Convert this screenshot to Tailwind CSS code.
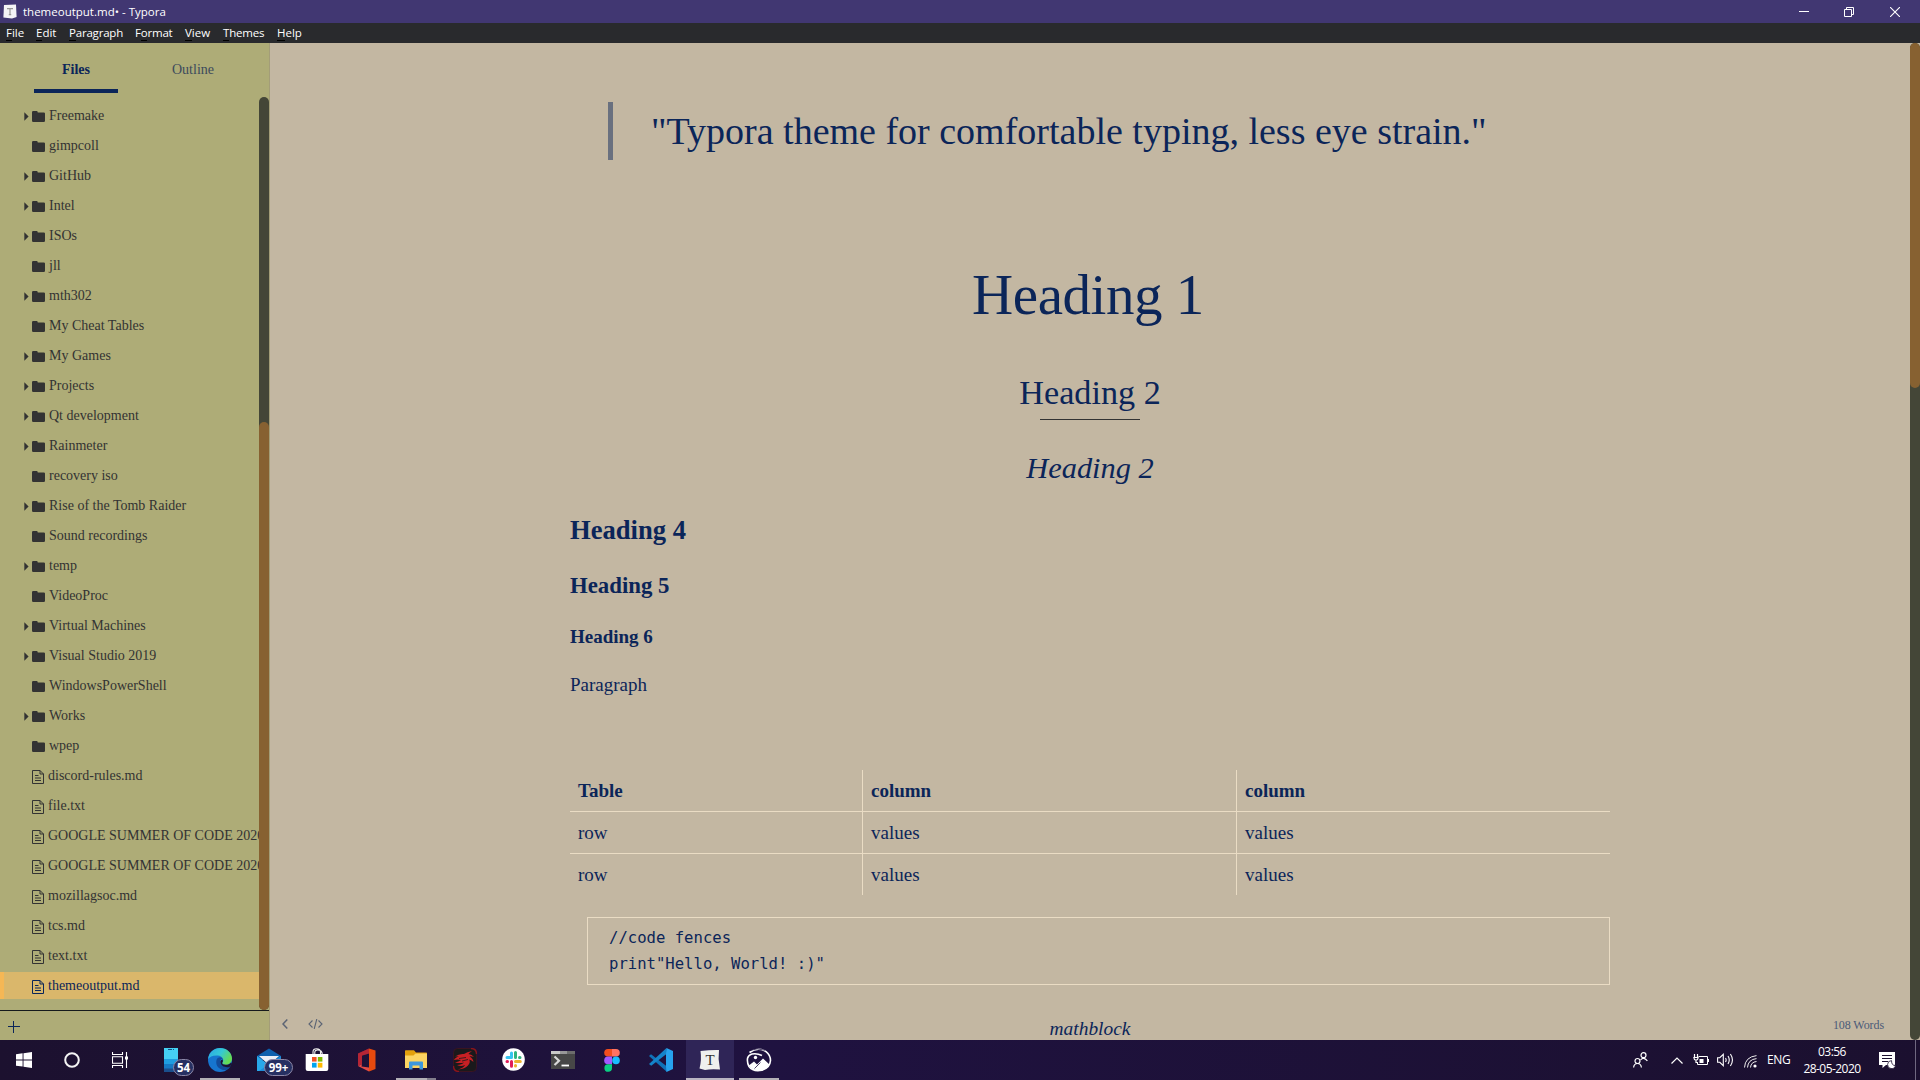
<!DOCTYPE html>
<html lang="en">
<head>
<meta charset="utf-8">
<title>themeoutput.md• - Typora</title>
<script src="https://cdn.jsdelivr.net/npm/@tailwindcss/browser@4"></script>
</head>
<body class="w-[1920px] h-[1080px] overflow-hidden flex flex-col bg-[#c3b7a2] font-['Liberation_Serif',serif] text-[#0b2559]">

<svg class="hidden">
  <symbol id="folder" viewBox="0 0 13 11"><path d="M0 1.2Q0 0 1.2 0H4.6Q5.6 0 5.8 1.4H11.8Q13 1.4 13 2.6V9.8Q13 11 11.8 11H1.2Q0 11 0 9.8Z" fill="#333"/></symbol>
  <symbol id="caret" viewBox="0 0 5 9"><path d="M.3 .3L4.6 4.5L.3 8.7Z" fill="#333"/></symbol>
  <symbol id="doc" viewBox="0 0 12 14"><path d="M.5 .5H8L11.5 4V13.5H.5ZM8 .5V4H11.5M3 5.5H6.5M3 8H9M3 10.5H9" fill="none" stroke="currentColor" stroke-width="1"/></symbol>
</svg>

<!-- Title bar -->
<header class="h-[23px] shrink-0 bg-[#413772] flex items-center pl-[3px] text-white font-['Open_Sans',sans-serif]">
  <svg class="w-[14px] h-[15px]" viewBox="0 0 14 15"><path d="M1 1L13 .6L13.6 13L9 14.4L.4 13.6Z" fill="#f4f4f6"/><path d="M4 4.6H10M7 4.6V10.6M5.8 10.6H8.2" stroke="#999" stroke-width="1.2" fill="none"/></svg>
  <span class="ml-[6px] text-[11.5px] leading-[22px] whitespace-nowrap">themeoutput.md• - Typora</span>
  <div class="ml-auto flex items-center pr-[20px]">
    <svg class="w-[10px] h-[11px]" viewBox="0 0 10 11"><path d="M0 5.5H10" stroke="#fff"/></svg>
    <svg class="w-[10px] h-[10px] ml-[35px]" viewBox="0 0 10 10"><path d="M.5 2.5H7.5V9.5H.5ZM2.5 2.5V.5H9.5V7.5H7.5" fill="none" stroke="#fff"/></svg>
    <svg class="w-[10px] h-[10px] ml-[36px]" viewBox="0 0 10 10"><path d="M0 0L10 10M10 0L0 10" stroke="#fff" stroke-width="1.1"/></svg>
  </div>
</header>

<!-- Menu bar -->
<nav class="h-[20px] shrink-0 bg-[#292a2d] flex pl-[6px] text-white text-[11.5px] leading-[19px] font-['Open_Sans',sans-serif] whitespace-nowrap">
  <span class="w-[30px]"><span class="border-b border-black">F</span>ile</span>
  <span class="w-[33px]"><span class="border-b border-black">E</span>dit</span>
  <span class="w-[66px] tracking-[-0.2px]"><span class="border-b border-black">P</span>aragraph</span>
  <span class="w-[50px] tracking-[-0.2px]">F<span class="border-b border-black">o</span>rmat</span>
  <span class="w-[38px]"><span class="border-b border-black">V</span>iew</span>
  <span class="w-[54px] tracking-[-0.2px]"><span class="border-b border-black">T</span>hemes</span>
  <span><span class="border-b border-black">H</span>elp</span>
</nav>

<div class="h-[997px] shrink-0 flex">
  <!-- Sidebar -->
  <aside class="w-[270px] shrink-0 bg-[#aeac77] border-r border-[#a39d78] flex flex-col text-[14px] text-[#333]">
    <div class="h-[54px] shrink-0 flex pl-[34px]">
      <div class="w-[84px] h-[50px] border-b-4 border-[#0b2559] text-center font-bold text-[#0b2559] leading-[53px]">Files</div>
      <div class="w-[150px] text-center leading-[53px] text-[#3c4a5c]">Outline</div>
    </div>
    <div class="h-[913px] flex">
      <div id="tree" class="w-[259px] overflow-hidden pt-[5px] flex flex-col gap-[3px]"></div>
      <div class="w-[10px] h-full rounded-[5px] bg-[#444637] flex flex-col justify-end"><div class="h-[588px] rounded-[5px] bg-[#876131]"></div></div>
    </div>
    <div class="h-[30px] border-t border-[#151a1c] flex items-center pl-[8px]">
      <svg class="w-[12px] h-[12px] mt-[3px]" viewBox="0 0 12 12"><path d="M0 5.5H12M5.5 0V12" stroke="#0b2559"/></svg>
    </div>
  </aside>

  <!-- Editor -->
  <main class="grow flex flex-col overflow-hidden relative">
    <article class="ml-[300px] w-[1040px] flex flex-col text-[19px] whitespace-nowrap">
      <blockquote class="mt-[59px] ml-[38px] h-[58px] border-l-[5px] border-[#69707f] pl-[38px] text-[38px] leading-[58px]">"Typora theme for comfortable typing, less eye strain."</blockquote>
      <h1 class="mt-[95px] mb-px text-[57px] leading-[80px] tracking-[-0.45px] text-center pr-[4px]">Heading 1</h1>
      <h2 class="mt-[30px] text-[34.2px] leading-[54px] text-center">Heading 2</h2>
      <div class="-mt-px w-[100px] h-px bg-[#333] self-center"></div>
      <h3 class="mt-[24px] text-[30.4px] leading-[48px] text-center italic">Heading 2</h3>
      <h4 class="mt-[18px] text-[26.6px] leading-[40px] font-bold">Heading 4</h4>
      <h5 class="mt-[18px] text-[22.8px] leading-[36px] font-bold">Heading 5</h5>
      <h6 class="mt-[18px] text-[19px] leading-[30px] font-bold">Heading 6</h6>
      <p class="mt-[18px] leading-[30px]">Paragraph</p>
      <div class="mt-[70px] grid grid-cols-[292px_374px_374px] leading-[41px]">
        <b class="pl-[8px] h-[42px] border-b border-[#eadcc4]">Table</b><b class="pl-[8px] h-[42px] border-b border-l border-[#eadcc4]">column</b><b class="pl-[8px] h-[42px] border-b border-l border-[#eadcc4]">column</b>
        <span class="pl-[8px] h-[42px] border-b border-[#eadcc4]">row</span><span class="pl-[8px] h-[42px] border-b border-l border-[#eadcc4]">values</span><span class="pl-[8px] h-[42px] border-b border-l border-[#eadcc4]">values</span>
        <span class="pl-[8px] h-[41px]">row</span><span class="pl-[8px] h-[41px] border-l border-[#eadcc4]">values</span><span class="pl-[8px] h-[41px] border-l border-[#eadcc4]">values</span>
      </div>
      <pre class="mt-[22px] ml-[17px] h-[68px] border border-[#eadcc4] pt-[7px] pl-[21px] font-['DejaVu_Sans_Mono',monospace] text-[15.6px] leading-[26px]">//code fences
print"Hello, World! :)"</pre>
      <div class="mt-[29px] text-center italic text-[19.4px] leading-[30px]">mathblock</div>
    </article>
    <div class="absolute left-[12px] top-[971px] right-[36px] h-[20px] flex items-center text-[#5b6474]">
      <svg class="w-[6px] h-[10px]" viewBox="0 0 6 10"><path d="M5.3 .5L1 5L5.3 9.5" fill="none" stroke="currentColor" stroke-width="1.5"/></svg>
      <svg class="w-[15px] h-[10px] ml-[20px]" viewBox="0 0 15 10"><path d="M4.5 1.5L1 5L4.5 8.5M10.5 1.5L14 5L10.5 8.5M8.8 0L6.2 10" fill="none" stroke="currentColor" stroke-width="1.1"/></svg>
      <span class="ml-auto text-[12px] tracking-[-0.08px] pt-px text-[#4b5a78]">108 Words</span>
    </div>
    <div class="absolute right-0 top-0 w-[10px] h-[997px] rounded-[5px] bg-[#444637]"><div class="h-[345px] rounded-[5px] bg-[#876131]"></div></div>
  </main>
</div>

<!-- Taskbar -->
<footer class="h-[40px] shrink-0 bg-linear-to-r from-[#1c112f] via-[#1f1240] via-40% to-[#1b102f] flex text-white font-['Open_Sans',sans-serif]">
  <div class="w-[48px] flex items-center justify-center"><svg class="w-4 h-4" viewBox="0 0 16 16"><path d="M0 2.2L6.6 1.3V7.5H0ZM7.5 1.2L16 0V7.5H7.5ZM0 8.4H6.6V14.6L0 13.7ZM7.5 8.4H16V16L7.5 14.8Z" fill="#fff"/></svg></div>
  <div class="w-[48px] flex items-center justify-center"><svg class="w-4 h-4" viewBox="0 0 16 16"><circle cx="8" cy="8" r="6.8" fill="none" stroke="#f4f4f4" stroke-width="2"/></svg></div>
  <div class="w-[51px] flex items-center pl-[16px]"><svg class="w-4 h-4" viewBox="0 0 16 16" fill="none" stroke="#fff" stroke-width="1.1"><path d="M.5 0V2.5H10.5V0M.5 16V13.5H10.5V16M.5 4.8H10.5V11.2H.5ZM14.5 0V16"/><path d="M13 4.5H16V7.5H13Z" fill="#fff" stroke="none"/></svg></div>
  <div class="flex gap-px">
    <div class="w-[48px] relative"><svg class="absolute left-[17px] top-[8px] w-[14px] h-[24px]" viewBox="0 0 14 24"><path d="M0 0H14V24H0Z" fill="#45d0f4"/><path d="M0 11H14V24H0Z" fill="#1f9de0"/><path d="M0 16H14V24H0Z" fill="#1679c4"/><path d="M0 20.5H14V24H0Z" fill="#1a4f8d"/><path d="M4 1.5H8M9 1.5H10" stroke="#135086"/></svg>
      <span class="absolute left-[26px] top-[18.5px] w-[21px] h-[17px] rounded-full border border-[#8b86a6] bg-[#263062] text-[11.5px] font-bold leading-[15px] text-center">54</span></div>
    <div class="w-[48px] relative"><svg class="absolute left-[12px] top-[8px] w-6 h-6" viewBox="0 0 24 24"><defs><linearGradient id="e1" x1="0" y1="0" x2="1" y2=".5"><stop offset="0" stop-color="#2aa5e6"/><stop offset=".55" stop-color="#35c9d5"/><stop offset="1" stop-color="#66db52"/></linearGradient></defs><circle cx="12" cy="12" r="12" fill="#1675cf"/><path d="M.1 11C1 4 6 0 12 0C19 0 24 5 24 10.5C24 14.5 21 16.8 17.5 16.8C15 16.8 13.8 15.8 14.5 14.6C16.5 12 14.5 8 10 7.5C5 7 1.5 9 .1 11Z" fill="url(#e1)"/><path d="M8.5 12C7 18 12 22.8 18.5 22L22.4 18.2C18 20 12 18 12.3 13.5C12.3 11 14 10 14.8 11.5C14 8.5 9.5 8.5 8.5 12Z" fill="#124c9b"/><path d="M14.2 14.8C13.8 16 15.5 16.8 17.5 16.8C20 16.8 22 16 23 14.5L24 16L21.5 19C17 20 12.5 18 12.4 13.8Q12.6 11.5 14.6 11.4Q15.5 13 14.2 14.8Z" fill="#1c1233"/></svg>
      <div class="absolute left-[4px] bottom-0 w-[40px] h-[2px] bg-[#b3b0b6]"></div></div>
    <div class="w-[48px] relative"><svg class="absolute left-[12px] top-[8px] w-6 h-6" viewBox="0 0 24 24"><path d="M0 8L12 .5L24 8V12H0Z" fill="#0d60ae"/><path d="M2 8H22L12 17Z" fill="#e9eef6"/><path d="M0 8L12 17V23H0Z" fill="#28a8ea"/><path d="M24 8L12 16L2 23H24Z" fill="#1d8bd8"/></svg>
      <span class="absolute left-[19px] top-[18.5px] w-[29px] h-[17px] rounded-full border border-[#8b86a6] bg-[#263062] text-[11.5px] font-bold leading-[15px] text-center">99+</span></div>
    <div class="w-[48px] relative"><svg class="absolute left-[11px] top-[8px] w-[24px] h-[24px]" viewBox="0 0 24 24"><path d="M8 7V4Q8 .7 11.5 .7Q15.5 .7 15.5 4V7M9.8 7V4Q10 2 12.5 2Q17.5 2 17.3 7" fill="none" stroke="#eee" stroke-width="1.1"/><path d="M.7 6H23.3V21Q23.3 23 21.3 23H2.7Q.7 23 .7 21Z" fill="#fff"/><path d="M7 9H11.6V13.6H7Z" fill="#f25022"/><path d="M12.8 9H17.4V13.6H12.8Z" fill="#7fba00"/><path d="M7 14.8H11.6V19.6H7Z" fill="#00a4ef"/><path d="M12.8 14.8H17.4V19.6H12.8Z" fill="#ffb900"/></svg></div>
    <div class="w-[48px] relative"><svg class="absolute left-[14px] top-[8px] w-[19px] h-[24px]" viewBox="0 0 19 24"><path d="M12 .5L1 5.5V18L5 16.2V7.5L12 5.5Z" fill="#c02a36"/><path d="M1 18L12 23.5V19.6L4.5 18.5L5 16.2Z" fill="#e34a46"/><path d="M12 .5L18.5 2.6V21L12 23.5Z" fill="#e64a0e"/><path d="M1 5.5L12 .5V5.5L5 7.8V16L1 18Z" fill="#a82035" opacity=".45"/></svg></div>
    <div class="w-[48px] relative"><svg class="absolute left-[13px] top-[10px] w-[22px] h-[20px]" viewBox="0 0 22 20"><path d="M0 1Q0 .3 .7 .3H9L11 2.5H21.3Q22 2.5 22 3.2V7H0Z" fill="#e3a00c"/><path d="M0 5.5H8.5L10.5 3.5H22V18H0Z" fill="#fcd462"/><path d="M4 19.5V12.5Q4 11.5 5 11.5H17Q18 11.5 18 12.5V19.5H14.5V15.5H7.5V19.5Z" fill="#3d97dc"/></svg>
      <div class="absolute left-[4px] bottom-0 w-[40px] h-[2px] bg-[#b3b0b6] border-r-[9px] border-[#827e8c]"></div></div>
    <div class="w-[48px] relative"><svg class="absolute left-[12px] top-[8px] w-6 h-6" viewBox="0 0 24 24"><rect x=".5" y=".5" width="23" height="23" rx="4" fill="#1a191b" stroke="#3a1420"/><path d="M18 .5Q23.5 .5 23.5 6M.5 18Q.5 23.5 6 23.5" fill="none" stroke="#8a141d" stroke-width="1.4"/><path d="M1 12Q2 9.5 6 8.5Q3 8 2 8.5Q6 5.5 11 6Q14 4 19 3Q16 5 15.5 6Q19 6.5 21 9Q18 8 16.5 8.5Q20 10 20.5 14Q18 11.5 16 11.5Q18 14 15 17.5Q12 21 5 21.5Q11 19.5 12 17Q8 19 4 17Q9 16.5 11 14.5Q7 15.5 2 14.5Q6 13.5 8 12Q4 11 1 12Z" fill="#c72024"/><path d="M6 10.5L13 9.5M9 13L15 11.5" stroke="#1a191b" stroke-width=".8"/></svg></div>
    <div class="w-[48px] relative"><svg class="absolute left-[12px] top-[8px] w-[23px] h-[23px]" viewBox="0 0 23 23"><circle cx="11.5" cy="11.5" r="11.3" fill="#fff"/><g stroke-width="3" stroke-linecap="round"><path d="M9.5 5V9.5M5 9.5H9.5" stroke="#36c5f0"/><path d="M13.5 4.5V9.5M18 9.5H17.5" stroke="#2eb67d"/><path d="M13.5 13.5H18.3M13.5 18V17.5" stroke="#ecb22e"/><path d="M9.5 13.5V18.3M5 13.5H5.5" stroke="#e01e5a"/></g></svg></div>
    <div class="w-[48px] relative"><svg class="absolute left-[12px] top-[11px] w-[24px] h-[18px]" viewBox="0 0 24 18"><path d="M0 0H24V18H0Z" fill="#474747"/><path d="M0 0H9V3H0Z" fill="#c9c9c9"/><path d="M9 0H16V3H9Z" fill="#989898"/><path d="M16 0H24V3H16Z" fill="#6c6c6c"/><path d="M3.5 5.5L8 9.7L3.5 14" stroke="#d8d8d8" stroke-width="2.2" fill="none"/><path d="M10.5 14.5H18" stroke="#fff" stroke-width="1.8"/></svg></div>
    <div class="w-[48px] relative"><svg class="absolute left-[16px] top-[9px] w-[16px] h-[23px]" viewBox="0 0 16 23"><path d="M8 0H4A3.8 3.8 0 0 0 4 7.6H8Z" fill="#f24e1e"/><path d="M8 0H12A3.8 3.8 0 0 1 12 7.6H8Z" fill="#ff7262"/><path d="M8 7.6H4A3.8 3.8 0 0 0 4 15.2H8Z" fill="#a259ff"/><circle cx="12" cy="11.4" r="3.8" fill="#1abcfe"/><path d="M8 15.2H4A3.8 3.8 0 1 0 8 19Z" fill="#0acf83"/></svg></div>
    <div class="w-[48px] relative"><svg class="absolute left-[12px] top-[8px] w-6 h-6" viewBox="0 0 24 24"><path d="M0 8L2 6.3L18 18.5V24Z" fill="#0f72b9" /><path d="M17.5 0V6L2.2 17.7L0 16Z" fill="#1484ca"/><path d="M17.5 0L24 3V21L17.5 24L17 18.5V5.5Z" fill="#27a3ee"/></svg></div>
    <div class="w-[48px] relative bg-[#2f2557]"><svg class="absolute left-[13px] top-[9px] w-[22px] h-[22px]" viewBox="0 0 22 22"><path d="M1.5 2Q11 .8 20 1L19.6 10L21 20.5Q12 19.6 6 21L.5 19.5Q2.8 11 1.5 2Z" fill="#eff0ee"/></svg>
      <span class="absolute left-[14px] top-[10px] w-[20px] h-[20px] text-center text-[15px] leading-[20px] text-[#333] font-['Liberation_Serif',serif]">T</span>
      <div class="absolute left-0 bottom-0 w-[48px] h-[2px] bg-[#b9b5c2]"></div></div>
    <div class="w-[48px] relative"><svg class="absolute left-[11px] top-[8px] w-[26px] h-[24px]" viewBox="0 0 26 24" fill="none" stroke="#fff"><path d="M3.5 4.5Q12-1.5 20 3.6Q24.5 7 24.5 12.5Q24 20 16 22.2Q7 24 3 18.5Q.8 14.5 1.6 10Q2.5 7 6 6Q11 5 16 7.5" stroke-width="1.6"/><circle cx="9.5" cy="9.5" r="1.7" fill="#fff" stroke="none"/><path d="M2.8 17.5L8 13.5L11 16.5L17 10.5L23.5 16.5Q20 22.4 13 22.4Q6 22.4 2.8 17.5Z" fill="#fff" stroke="none"/><path d="M8.5 20.5L14.5 14.5M3.5 2.5Q11-.6 19 2.2" stroke="#1f1240" stroke-width=".8"/></svg>
      <div class="absolute left-[4px] bottom-0 w-[40px] h-[2px] bg-[#b3b0b6]"></div></div>
  </div>
  <div class="ml-auto flex items-center">
    <svg class="w-[15px] h-[16px] mr-[2px]" viewBox="0 0 15 16" fill="none" stroke="#fff" stroke-width="1.2"><circle cx="10.5" cy="3.2" r="2.5"/><path d="M7.5 8Q10.5 4.2 14.4 8.8"/><circle cx="4.5" cy="9" r="2.5"/><path d="M.6 15.5Q1 11.5 4.5 11.5Q8 11.5 8.4 15.5"/></svg>
    <svg class="w-[12px] h-[7px] ml-[21px]" viewBox="0 0 12 7"><path d="M.5 6.5L6 1L11.5 6.5" fill="none" stroke="#fff" stroke-width="1.2"/></svg>
    <svg class="w-[16px] h-[12px] ml-[10px]" viewBox="0 0 16 12" fill="none" stroke="#fff"><path d="M5.5 2.5H14.5V10.5H4.5V8M15.5 5V8"/><path d="M6.5 5H10.5V9H6.5Z" fill="#fff" stroke="none"/><path d="M1.5 0V3M4.5 0V3M.3 3.5H5.7M1 4Q1 6 3 6.2Q5 6 5 4M3 6V8.5H4.5" stroke-width="1.2"/></svg>
    <svg class="w-[17px] h-[14px] ml-[8px]" viewBox="0 0 17 14" fill="none" stroke="#fff" stroke-width="1.1"><path d="M.6 4.7H2.8L6.3 1.3V12.7L2.8 9.3H.6Z"/><path d="M8.5 5Q9.8 7 8.5 9M11 3Q13.5 7 11 11M13.4 1Q17.5 7 13.4 13"/></svg>
    <svg class="w-[13px] h-[13px] ml-[10px] mt-[3px]" viewBox="0 0 13 13" fill="none" stroke="#eee"><circle cx="11" cy="11" r="1.6" fill="#fff" stroke="none"/><path d="M.5 12.5Q1 2 12.5 .6M3.5 12.5Q4 4.5 12.5 3.6M6.5 12.5Q7 7 12.5 6.5" /></svg>
    <span class="ml-[10px] w-[24px] text-[12px] tracking-[-0.3px] leading-[20px]">ENG</span>
    <div class="ml-[11px] w-[60px] text-center text-[12px] leading-[17px] tracking-[-0.55px] whitespace-nowrap">03:56<br>28-05-2020</div>
    <svg class="w-[17px] h-[17px] ml-[17px]" viewBox="0 0 17 17"><path d="M0 0H16V13H7L3.5 16V13H0Z" fill="#fff"/><path d="M3 3.5H13M3 6.5H13M3 9.5H9" stroke="#1b102f" stroke-width="1.2"/><path d="M12.5 8.6A4 4 0 1 0 16.5 13.4Q12.5 13.8 12.5 8.6Z" fill="#fff" stroke="#1b102f" stroke-width=".8"/></svg>
    <div class="ml-[19px] mr-[4px] w-px h-[40px] bg-[#6f6880]"></div>
  </div>
</footer>

<script>
  const folders = [["Freemake",1],["gimpcoll",0],["GitHub",1],["Intel",1],["ISOs",1],["jll",0],["mth302",1],["My Cheat Tables",0],["My Games",1],["Projects",1],["Qt development",1],["Rainmeter",1],["recovery iso",0],["Rise of the Tomb Raider",1],["Sound recordings",0],["temp",1],["VideoProc",0],["Virtual Machines",1],["Visual Studio 2019",1],["WindowsPowerShell",0],["Works",1],["wpep",0]];
  const files = ["discord-rules.md","file.txt","GOOGLE SUMMER OF CODE 2020","GOOGLE SUMMER OF CODE 2020","mozillagsoc.md","tcs.md","text.txt","themeoutput.md"];
  let rows = "";
  for (const [name, open] of folders)
    rows += `<div class="h-[27px] shrink-0 flex items-center pl-[24px] whitespace-nowrap"><svg class="w-[5px] h-[9px] shrink-0 mt-px ${open ? "" : "invisible"}"><use href="#caret"/></svg><svg class="w-[13px] h-[11px] shrink-0 ml-[3px] mt-[2px]"><use href="#folder"/></svg><span class="ml-[4px] leading-[27px]">${name}</span></div>`;
  for (const name of files) {
    const active = name === "themeoutput.md";
    rows += `<div class="h-[27px] shrink-0 flex items-center border-l-4 pl-[28px] whitespace-nowrap ${active ? "bg-[#dab76b] border-[#f5b755] text-[#0b2559]" : "border-transparent"}"><svg class="w-[12px] h-[14px] shrink-0 mt-[3px]"><use href="#doc"/></svg><span class="ml-[4px] leading-[27px]">${name}</span></div>`;
  }
  document.getElementById("tree").innerHTML = rows;
</script>
</body>
</html>
